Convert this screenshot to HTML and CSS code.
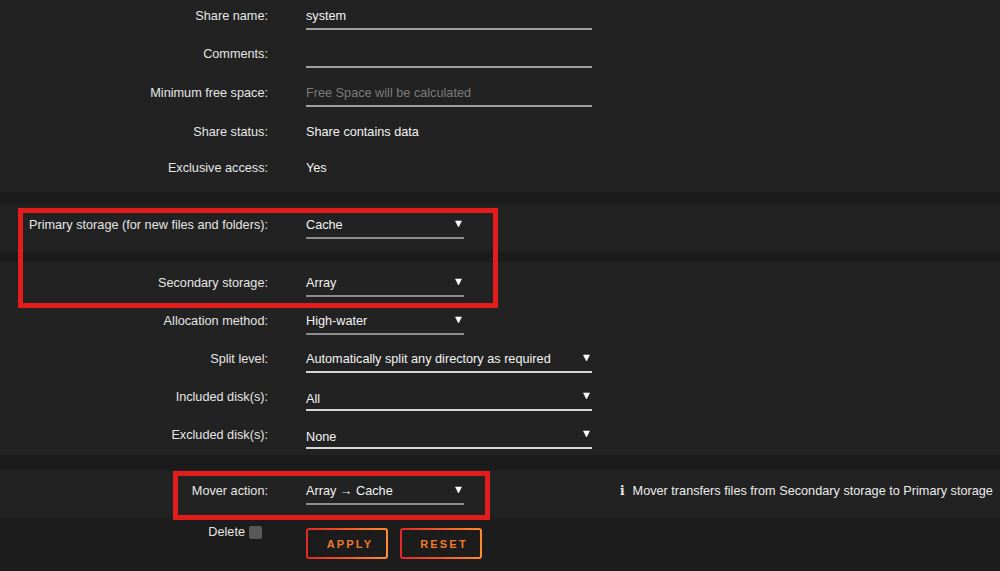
FILE: index.html
```html
<!DOCTYPE html>
<html>
<head>
<meta charset="utf-8">
<link rel="stylesheet" href="styles.css">
</head>
<body>
<div class="page">
  <section class="sec sec-top">
    <div class="row r1"><div class="label">Share name:</div><div class="field wide light">system</div></div>
    <div class="row r2"><div class="label">Comments:</div><div class="field wide light"></div></div>
    <div class="row r2"><div class="label">Minimum free space:</div><div class="field wide light placeholder">Free Space will be calculated</div></div>
    <div class="row r4"><div class="label">Share status:</div><div class="value">Share contains data</div></div>
    <div class="row r5"><div class="label">Exclusive access:</div><div class="value">Yes</div></div>
  </section>
  <div class="band band-a"></div>
  <section class="sec sec-pad">
    <div class="row"><div class="label">Primary storage (for new files and folders):</div><div class="field narrow sel">Cache<svg class="arrow" viewBox="0 0 7 8"><path d="M0.5 1 L6.5 1 L3.5 7 Z" fill="#fff" stroke="#fff" stroke-width="0.6" stroke-linejoin="round"/></svg></div></div>
  </section>
  <div class="band band-b"></div>
  <section class="sec sec-pad sec-mid">
    <div class="row"><div class="label">Secondary storage:</div><div class="field narrow sel">Array<svg class="arrow" viewBox="0 0 7 8"><path d="M0.5 1 L6.5 1 L3.5 7 Z" fill="#fff" stroke="#fff" stroke-width="0.6" stroke-linejoin="round"/></svg></div></div>
    <div class="row"><div class="label">Allocation method:</div><div class="field narrow sel">High-water<svg class="arrow" viewBox="0 0 7 8"><path d="M0.5 1 L6.5 1 L3.5 7 Z" fill="#fff" stroke="#fff" stroke-width="0.6" stroke-linejoin="round"/></svg></div></div>
    <div class="row"><div class="label">Split level:</div><div class="field wide sel bright">Automatically split any directory as required<svg class="arrow" viewBox="0 0 7 8"><path d="M0.5 1 L6.5 1 L3.5 7 Z" fill="#fff" stroke="#fff" stroke-width="0.6" stroke-linejoin="round"/></svg></div></div>
    <div class="row r-inc"><div class="label">Included disk(s):</div><div class="field wide sel bright low">All<svg class="arrow" viewBox="0 0 7 8"><path d="M0.5 1 L6.5 1 L3.5 7 Z" fill="#fff" stroke="#fff" stroke-width="0.6" stroke-linejoin="round"/></svg></div></div>
    <div class="row r-exc"><div class="label">Excluded disk(s):</div><div class="field wide sel bright low">None<svg class="arrow" viewBox="0 0 7 8"><path d="M0.5 1 L6.5 1 L3.5 7 Z" fill="#fff" stroke="#fff" stroke-width="0.6" stroke-linejoin="round"/></svg></div></div>
  </section>
  <div class="band band-c"></div>
  <section class="sec sec-pad">
    <div class="row row-info"><div class="label">Mover action:</div><div class="field narrow sel">Array → Cache<svg class="arrow" viewBox="0 0 7 8"><path d="M0.5 1 L6.5 1 L3.5 7 Z" fill="#fff" stroke="#fff" stroke-width="0.6" stroke-linejoin="round"/></svg></div><div class="info"><span class="info-i">i</span>Mover transfers files from Secondary storage to Primary storage</div></div>
  </section>
  <section class="actions">
    <div class="del">Delete <span class="check"></span></div>
    <div class="buttons">
      <button class="btn">APPLY</button>
      <button class="btn">RESET</button>
    </div>
  </section>

  <div class="mark mark-1"></div>
  <div class="mark mark-2"></div>
</div>
</body>
</html>
```

FILE: styles.css
```css
html, body {
  margin: 0;
  padding: 0;
  background: #1c1c1c;
}
body {
  width: 1000px;
  height: 571px;
  overflow: hidden;
  font-family: "Liberation Sans", Arial, sans-serif;
  font-size: 12.7px;
  color: #ececec;
}
.page {
  position: relative;
  width: 1000px;
  height: 571px;
}
.sec {
  background: #222222;
}
.sec-pad {
  padding-top: 5px;
  padding-bottom: 5px;
}
.sec-mid {
  padding-bottom: 0;
}
.band {
  background: #1b1b1b;
}
.band-a { height: 12px; }
.band-b { height: 10px; }
.band-c { height: 15px; }

.row {
  display: grid;
  grid-template-columns: 268px 286px;
  column-gap: 38px;
  height: 38px;
  align-items: start;
}
.row.r1 { height: 38px; }
.row.r2 { height: 39px; }
.row.r4 { height: 36px; }
.row.r5 { height: 40px; }
.row.r-inc { height: 38px; }
.row.r-exc { height: 36px; }
.row-info {
  grid-template-columns: 268px 286px auto;
}
.label {
  text-align: right;
  padding-top: 7px;
  line-height: 18px;
  color: #e6e6e6;
  white-space: nowrap;
}
.value {
  padding-top: 7px;
  line-height: 18px;
  color: #f4f4f4;
}
.field {
  box-sizing: border-box;
  margin-top: 7px;
  height: 23px;
  line-height: 18px;
  border-bottom: 2px solid #8c8c8c;
  color: #f4f4f4;
  white-space: nowrap;
}
.field.light { border-bottom-color: #a0a0a0; }
.field.bright { border-bottom-color: #d6d6d6; }
.field.wide { width: 286px; }
.field.narrow { width: 158px; }
.field.placeholder { color: #7c7c7c; }
.field.low { line-height: 20px; padding-top: 1px; }
.sel {
  display: flex;
  justify-content: space-between;
  align-items: flex-start;
}
.arrow {
  width: 7px;
  height: 8px;
  margin-top: 4px;
  margin-right: 2px;
  flex: none;
}
.field.low .arrow { margin-top: 3px; }

.info {
  padding-top: 7px;
  line-height: 18px;
  margin-left: -12px;
  white-space: nowrap;
  color: #ececec;
}
.info-i {
  display: inline-block;
  font-family: "DejaVu Serif", serif;
  font-weight: bold;
  font-size: 12px;
  margin: 0 8px 0 2px;
}

.actions {
  display: grid;
  grid-template-columns: 262px auto;
  column-gap: 44px;
  padding-top: 5px;
  background: #1c1c1c;
  height: 48px;
  align-items: start;
}
.del {
  display: flex;
  justify-content: flex-end;
  align-items: center;
  gap: 4px;
  line-height: 18px;
  color: #e6e6e6;
}
.check {
  display: inline-block;
  width: 13px;
  height: 13px;
  border-radius: 2px;
  background: #585858;
}
.buttons {
  display: flex;
  gap: 12px;
  margin-top: 5px;
}
.btn {
  width: 82px;
  height: 31px;
  box-sizing: border-box;
  border: 2px solid transparent;
  border-radius: 3px;
  background:
    linear-gradient(#1c1c1c, #1c1c1c) padding-box,
    linear-gradient(90deg, #e22828, #ff8c2f) border-box;
  color: #f07a2c;
  font-family: "Liberation Sans", Arial, sans-serif;
  font-weight: bold;
  font-size: 11px;
  letter-spacing: 2.2px;
  padding: 0 0 0 6px;
}

.mark {
  position: absolute;
  border: 5px solid #e31c1c;
  box-sizing: border-box;
  pointer-events: none;
}
.mark-1 {
  left: 18px;
  top: 208px;
  width: 480px;
  height: 100px;
}
.mark-2 {
  left: 173px;
  top: 471px;
  width: 317px;
  height: 49px;
}
```
